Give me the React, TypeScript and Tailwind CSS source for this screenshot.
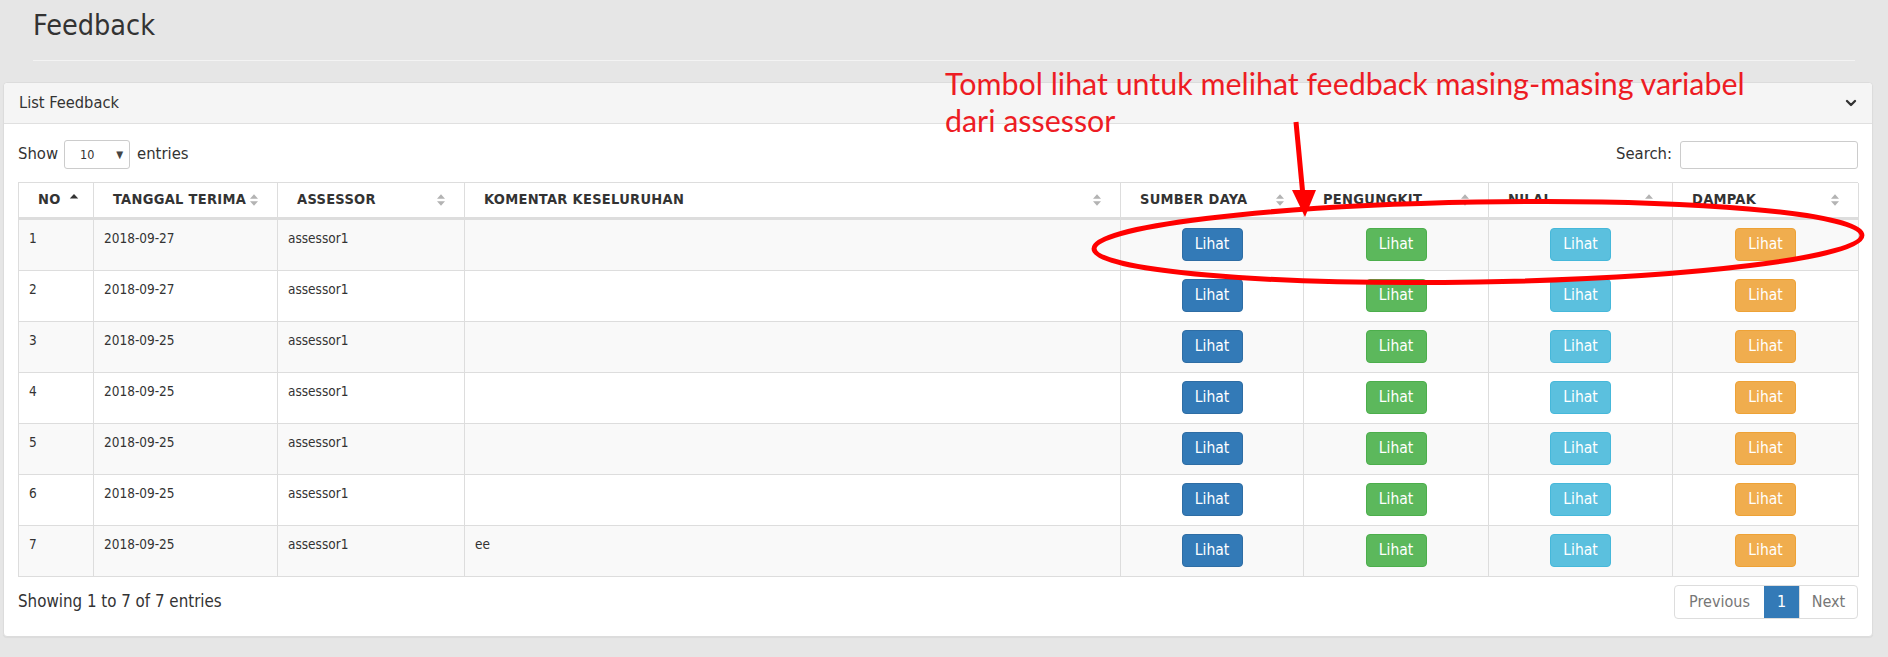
import React from "react";
import { ChevronDown } from "lucide-react";

const rows = [
  { no: 1, date: "2018-09-27", assessor: "assessor1", komentar: "" },
  { no: 2, date: "2018-09-27", assessor: "assessor1", komentar: "" },
  { no: 3, date: "2018-09-25", assessor: "assessor1", komentar: "" },
  { no: 4, date: "2018-09-25", assessor: "assessor1", komentar: "" },
  { no: 5, date: "2018-09-25", assessor: "assessor1", komentar: "" },
  { no: 6, date: "2018-09-25", assessor: "assessor1", komentar: "" },
  { no: 7, date: "2018-09-25", assessor: "assessor1", komentar: "ee" },
];

const headers = [
  { label: "NO", active: true },
  { label: "TANGGAL TERIMA" },
  { label: "ASSESSOR" },
  { label: "KOMENTAR KESELURUHAN" },
  { label: "SUMBER DAYA" },
  { label: "PENGUNGKIT" },
  { label: "NILAI" },
  { label: "DAMPAK" },
];

const btnClasses = [
  "bg-[#337ab7] border-[#2e6da4]",
  "bg-[#5cb85c] border-[#4cae4c]",
  "bg-[#5bc0de] border-[#46b8da]",
  "bg-[#f0ad4e] border-[#eea236]",
];

function SortIcon({ active }: { active?: boolean }) {
  if (active) {
    return (
      <svg width="10" height="14" viewBox="0 0 10 14" className="shrink-0">
        <path d="M0.8 5.6 L5 1 L9.2 5.6 Z" fill="#333" />
      </svg>
    );
  }
  return (
    <svg width="10" height="14" viewBox="0 0 10 14" className="shrink-0">
      <path d="M1 5.8 L5 1.2 L9 5.8 Z M1 8.2 L5 12.8 L9 8.2 Z" fill="#b3b3b3" />
    </svg>
  );
}

export default function App() {
  return (
    <div className="relative min-h-screen w-full bg-[#e6e6e6] text-[#333] font-['DejaVu_Sans_Condensed','DejaVu_Sans',sans-serif]">
      {/* Page title */}
      <div className="px-[33px] pt-[7px]">
        <h1 className="text-[28.5px] leading-[38px] font-normal text-[#333]">Feedback</h1>
        <div className="mt-[15px] h-px bg-[#f3f3f3]" />
      </div>

      {/* Panel */}
      <div className="ml-[3px] mr-[15px] mt-[21px] rounded-[4px] border border-[#dcdcdc] bg-white shadow-[0_1px_1px_rgba(0,0,0,0.05)]">
        <div className="flex h-[41px] items-center justify-between rounded-t-[4px] border-b border-[#e0e0e0] bg-[#f5f5f5] pl-[15px] pr-[13px]">
          <span className="text-[16.3px] text-[#333]">List Feedback</span>
          <ChevronDown size={16} strokeWidth={3.5} className="text-[#333]" />
        </div>

        <div className="px-[14px] pt-[16px] pb-[17px]">
          {/* Controls */}
          <div className="flex h-[29px] items-center justify-between">
            <div className="flex items-center text-[16.5px]">
              <span>Show</span>
              <div className="ml-[6px] flex h-[29px] w-[66px] items-center justify-between rounded-[3px] border border-[#ccc] bg-white pl-[15px] pr-[6px]">
                <span className="text-[12.5px] pt-[2px]">10</span>
                <span className="text-[10px] text-[#444]">▼</span>
              </div>
              <span className="ml-[7px]">entries</span>
            </div>
            <div className="flex items-center text-[16.5px]">
              <span>Search:</span>
              <div className="ml-[8px] h-[28px] w-[178px] rounded-[3px] border border-[#ccc] bg-white" />
            </div>
          </div>

          {/* Table */}
          <div className="mt-[13px] grid grid-cols-[75px_184px_187px_656px_183px_185px_184px_186px] border-l border-t border-[#ddd] text-[13.5px]">
            {headers.map((h) => (
              <div
                key={h.label}
                className="flex h-[37px] items-center justify-between border-b-[3px] border-r border-[#ddd] pl-[19px] pr-[18px] text-[14.5px] font-bold tracking-[0.3px] text-[#333]"
              >
                <span className={h.active ? "mr-[8px]" : ""}>{h.label}</span>
                {h.active ? (
                  <span className="flex flex-1 justify-start">
                    <SortIcon active />
                  </span>
                ) : (
                  <SortIcon />
                )}
              </div>
            ))}
            {rows.map((r, i) => {
              const bg = i % 2 === 0 ? "bg-[#f9f9f9]" : "bg-white";
              return (
                <React.Fragment key={r.no}>
                  <div className={`h-[51px] border-b border-r border-[#ddd] pl-[10px] pt-[8px] ${bg}`}>{r.no}</div>
                  <div className={`h-[51px] border-b border-r border-[#ddd] pl-[10px] pt-[8px] ${bg}`}>{r.date}</div>
                  <div className={`h-[51px] border-b border-r border-[#ddd] pl-[10px] pt-[8px] ${bg}`}>{r.assessor}</div>
                  <div className={`h-[51px] border-b border-r border-[#ddd] pl-[10px] pt-[8px] ${bg}`}>{r.komentar}</div>
                  {btnClasses.map((c, j) => (
                    <div key={j} className={`flex h-[51px] justify-center border-b border-r border-[#ddd] pt-[8px] ${bg}`}>
                      <button className={`h-[33px] w-[61px] rounded-[4px] border text-[15.5px] text-white ${c}`}>Lihat</button>
                    </div>
                  ))}
                </React.Fragment>
              );
            })}
          </div>

          {/* Footer */}
          <div className="mt-[8px] flex items-center justify-between">
            <span className="text-[16.8px]">Showing 1 to 7 of 7 entries</span>
            <div className="flex h-[34px] overflow-hidden rounded-[4px] border border-[#ddd] text-[16px]">
              <span className="flex w-[89px] items-center justify-center text-[#777]">Previous</span>
              <span className="flex w-[35px] items-center justify-center bg-[#337ab7] text-white">1</span>
              <span className="flex w-[58px] items-center justify-center border-l border-[#ddd] text-[#777]">Next</span>
            </div>
          </div>
        </div>
      </div>

      {/* Annotation overlay */}
      <div className="pointer-events-none absolute left-[945px] top-[65px] font-['Lato',sans-serif] text-[30.4px] leading-[37px] text-[#ed1c24]">
        <div>Tombol lihat untuk melihat feedback masing-masing variabel</div>
        <div>dari assessor</div>
      </div>
      <svg className="pointer-events-none absolute left-0 top-0" width="1888" height="657" viewBox="0 0 1888 657">
        <ellipse cx="1478" cy="242" rx="384" ry="40" transform="rotate(-1 1478 242)" fill="none" stroke="#ff0000" strokeWidth="5" />
        <line x1="1296" y1="122" x2="1303" y2="196" stroke="#ff0000" strokeWidth="5" />
        <polygon points="1305,217 1292,190 1316,190" fill="#ff0000" />
      </svg>
    </div>
  );
}
